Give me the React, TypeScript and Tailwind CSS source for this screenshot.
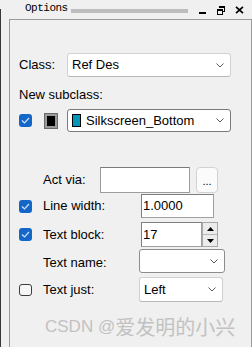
import React from 'react';

function Chevron() {
  return (
    <svg width="8" height="5" viewBox="0 0 8 5" className="shrink-0">
      <polyline points="0.5,0.5 4,4 7.5,0.5" fill="none" stroke="#5a5a5a" strokeWidth="1" />
    </svg>
  );
}

function Check({ on }: { on: boolean }) {
  if (!on) {
    return <div className="h-[12px] w-[13px] shrink-0 rounded-[3px] border border-[#3c3c3c] bg-[#f7f7f7]" />;
  }
  return (
    <div className="flex h-[13px] w-[13px] shrink-0 items-center justify-center rounded-[3px] bg-[#1467c8]">
      <svg width="9" height="7" viewBox="0 0 9 7">
        <polyline points="1,3.5 3.5,6 8,1" fill="none" stroke="#cfe3fa" strokeWidth="1.2" />
      </svg>
    </div>
  );
}

function Select({ className, children }: any) {
  return (
    <div className={`flex items-center justify-between rounded-[3px] border bg-white pl-[4px] pr-[6px] ${className}`}>
      <div className="flex items-center">{children}</div>
      <Chevron />
    </div>
  );
}

export default function App() {
  return (
    <div className="flex h-[347px] w-[252px] overflow-hidden bg-[#f0f0f0] font-['Liberation_Sans',Arial,sans-serif] text-[13px] leading-[16px] text-black">
      {/* window edge */}
      <div className="mt-[9px] w-px shrink-0 bg-[#3a3a3a]" />

      <div className="flex min-w-0 flex-1 flex-col">
        {/* title bar */}
        <div className="flex h-[19px] shrink-0 items-start pl-[24px]">
          <span className="mt-[2px] font-['Liberation_Mono',monospace] text-[11px] leading-[13px] tracking-[-0.5px]">Options</span>
          <div className="ml-[3px] mt-[9px] h-[4px] w-[117px] bg-[#bdbdbd]" />
          <div className="ml-[11px] mt-[12px] h-[2px] w-[7px] bg-black" />
          <svg width="8" height="9" viewBox="0 0 8 9" className="ml-[11px] mt-[6px]">
            <path d="M2 0h6v2H2z M7 2h1v4H6V5h1z M0 3h6v2H0z M0 5h1v4H0z M5 5h1v4H5z M1 8h4v1H1z" fill="#000" />
          </svg>
          <svg width="9" height="8" viewBox="0 0 9 8" className="ml-[10px] mt-[6px]">
            <path d="M1 0.8L8 7.2M8 0.8L1 7.2" stroke="#000" strokeWidth="1.7" />
          </svg>
        </div>

        {/* panel */}
        <div className="ml-[8px] flex flex-1 flex-col border-l border-r border-t border-[#9a9a9a] pl-[9px] pt-[33px]">
          <div className="flex h-[24px] items-center">
            <span className="w-[48px]">Class:</span>
            <Select className="h-[24px] w-[164px] border-[#d3d3d3] border-b-[#b8b8b8]">Ref Des</Select>
          </div>

          <div className="mt-[10px] h-[16px]">New subclass:</div>

          <div className="mt-[6px] flex h-[23px] items-center">
            <Check on />
            <div className="ml-[12px] h-[16px] w-[14px] border border-[#6a6a6a] bg-[#9a9a9a] p-[2px]">
              <div className="h-full w-full bg-black" />
            </div>
            <Select className="ml-[9px] h-[23px] w-[164px] border-[#7a7a7a]">
              <div className="mr-[5px] h-[13px] w-[9px] border border-black bg-[#0096b6]" />
              <span>Silkscreen_Bottom</span>
            </Select>
          </div>

          <div className="mt-[35px] flex h-[26px] items-center">
            <span className="ml-[24px] w-[57px]">Act via:</span>
            <div className="h-[26px] w-[90px] border border-[#9c9c9c] border-t-[#7a7a7a] bg-white" />
            <div className="ml-[6px] flex h-[26px] w-[22px] items-end justify-center rounded-[4px] border border-[#d2d2d2] bg-[#fbfbfb] pb-[5px] text-[11px] leading-[11px]">
              ...
            </div>
          </div>

          <div className="mt-px flex h-[24px] items-center">
            <Check on />
            <span className="ml-[11px] w-[98px]">Line width:</span>
            <div className="flex h-[24px] w-[73px] items-center border border-[#a0a0a0] border-l-[#7e7e7e] border-t-[#7e7e7e] bg-white pl-[1px]">
              1.0000
            </div>
          </div>

          <div className="mt-[4px] flex h-[25px] items-center">
            <Check on />
            <span className="ml-[11px] w-[98px]">Text block:</span>
            <div className="flex h-[25px] w-[61px] items-center border border-[#a0a0a0] border-l-[#7e7e7e] border-t-[#7e7e7e] bg-white pl-[1px]">
              17
            </div>
            <div className="flex h-[25px] w-[16px] flex-col border border-[#a8a8a8] bg-[#f0f0f0]">
              <div className="flex flex-1 items-center justify-center border-b border-[#b8b8b8] bg-[#ececec]">
                <svg width="7" height="4" viewBox="0 0 7 4"><path d="M0 4L3.5 0L7 4z" fill="#000" /></svg>
              </div>
              <div className="flex flex-1 items-center justify-center bg-[#ececec]">
                <svg width="7" height="4" viewBox="0 0 7 4"><path d="M0 0L3.5 4L7 0z" fill="#000" /></svg>
              </div>
            </div>
          </div>

          <div className="mt-[2px] flex h-[24px] items-center">
            <span className="ml-[24px] w-[96px] pt-[3px]">Text name:</span>
            <Select className="h-[24px] w-[86px] border-[#8c8c8c]" />
          </div>

          <div className="mt-[4px] flex h-[25px] items-center">
            <Check on={false} />
            <span className="ml-[11px] w-[96px]">Text just:</span>
            <Select className="h-[25px] w-[84px] border-[#d0d0d0] border-b-[#b8b8b8]">Left</Select>
          </div>

          <div className="ml-[26px] mt-[13px] flex h-[24px] items-center whitespace-nowrap text-[#c2c2c2]">
            <span className="text-[17px]">CSDN @</span>
            <span className="font-['Noto_Sans_CJK_SC',sans-serif] text-[20px]">爱发明的小兴</span>
          </div>
        </div>
      </div>
    </div>
  );
}
